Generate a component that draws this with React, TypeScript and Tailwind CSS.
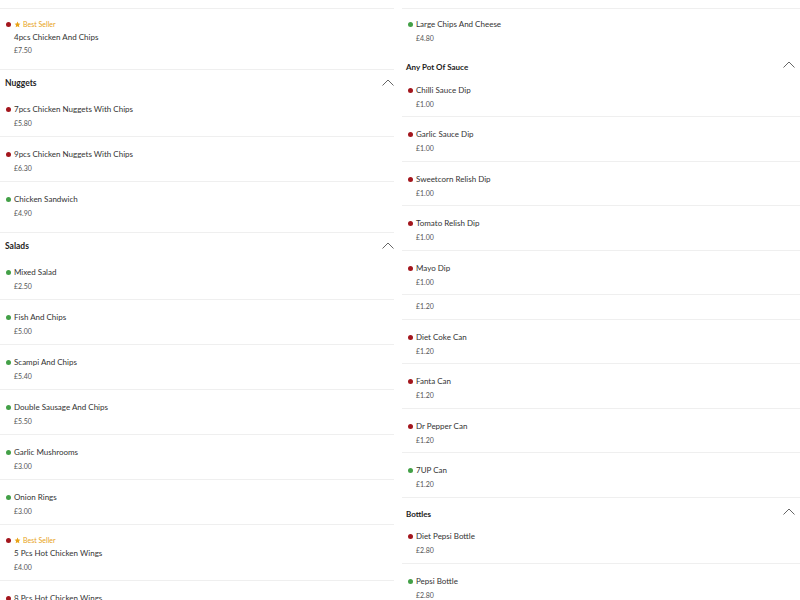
import React from "react";

type Item = { name?: string; price: string; veg?: boolean; best?: boolean; h?: number };

const font = { fontFamily: "Lato, 'Open Sans', sans-serif" };

function Dot({ veg }: { veg?: boolean }) {
  return (
    <span
      className={
        veg
          ? "inline-block w-[5px] h-[5px] rounded-full bg-[#43a047] shrink-0"
          : "inline-block w-[5px] h-[5px] rounded-full bg-[#a3161d] shrink-0"
      }
    />
  );
}

function Chevron() {
  return (
    <svg width="12" height="7" viewBox="0 0 12 7" className="shrink-0">
      <polyline points="0.5,6.5 6,1 11.5,6.5" fill="none" stroke="#555" strokeWidth="0.9" />
    </svg>
  );
}

function Star() {
  return (
    <svg width="7" height="7" viewBox="0 0 24 24" className="shrink-0">
      <path
        d="M12 2l3.09 6.26L22 9.27l-5 4.87 1.18 6.88L12 17.77l-6.18 3.25L7 14.14 2 9.27l6.91-1.01L12 2z"
        fill="#e8a317"
      />
    </svg>
  );
}

function Row({ item, last }: { item: Item; last?: boolean }) {
  if (!item.name) {
    return (
      <div className="h-[25px] border-b border-[#efefef] pl-[14px] pt-[6px] flex flex-col">
        <span className="text-[7px] leading-[10px] text-[#555]">{item.price}</span>
      </div>
    );
  }
  const h = item.best
    ? "h-[56px] pt-[10px] "
    : item.h === 44
    ? "h-[44px] pt-[11px] "
    : "h-[45px] pt-[11px] ";
  return (
    <div className={h + (!last ? "border-b border-[#efefef] " : "") + "flex flex-col pl-[6px]"}>
      {item.best && (
        <div className="flex items-center h-[10px] mb-[2px]">
          <Dot veg={item.veg} />
          <span className="ml-[3px]">
            <Star />
          </span>
          <span className="ml-[2px] text-[7px] leading-[10px] text-[#e8a317]">Best Seller</span>
        </div>
      )}
      <div className="flex items-center h-[12px]">
        {!item.best ? <Dot veg={item.veg} /> : <span className="w-[5px]" />}
        <span className="ml-[3px] text-[8px] leading-[12px] text-[#333]">{item.name}</span>
      </div>
      <div className="mt-[3px] pl-[8px] text-[7px] leading-[10px] text-[#555]">{item.price}</div>
    </div>
  );
}

function LeftSection({ title, items }: { title: string; items: Item[] }) {
  return (
    <div className="border-t border-[#efefef] pb-[5px]">
      <div className="h-[22px] pt-[8px] flex items-start justify-between pl-[5px]">
        <span className="text-[8.5px] leading-[10px] font-bold text-[#222]">{title}</span>
        <span className="mt-[1px]">
          <Chevron />
        </span>
      </div>
      {items.map((it, i) => (
        <Row key={i} item={it} last={i === items.length - 1} />
      ))}
    </div>
  );
}

function RightSection({ title, items, tall }: { title: string; items: Item[]; tall?: boolean }) {
  return (
    <div>
      <div
        className={
          tall
            ? "h-[21px] pt-[11px] flex items-start justify-between pl-[4px] pr-[5px]"
            : "h-[20px] pt-[9px] flex items-start justify-between pl-[4px] pr-[5px]"
        }
      >
        <span className="text-[8px] leading-[10px] font-bold text-[#222]">{title}</span>
        <span className="-mt-[1px]">
          <Chevron />
        </span>
      </div>
      {items.map((it, i) => (
        <Row key={i} item={it} />
      ))}
    </div>
  );
}

const nuggets: Item[] = [
  { name: "7pcs Chicken Nuggets With Chips", price: "£5.80" },
  { name: "9pcs Chicken Nuggets With Chips", price: "£6.30" },
  { name: "Chicken Sandwich", price: "£4.90", veg: true },
];

const salads: Item[] = [
  { name: "Mixed Salad", price: "£2.50", veg: true },
  { name: "Fish And Chips", price: "£5.00", veg: true },
  { name: "Scampi And Chips", price: "£5.40", veg: true },
  { name: "Double Sausage And Chips", price: "£5.50", veg: true },
  { name: "Garlic Mushrooms", price: "£3.00", veg: true },
  { name: "Onion Rings", price: "£3.00", veg: true },
  { name: "5 Pcs Hot Chicken Wings", price: "£4.00", best: true },
  { name: "8 Pcs Hot Chicken Wings", price: "£6.00" },
];

const sauces: Item[] = [
  { name: "Chilli Sauce Dip", price: "£1.00", h: 44 },
  { name: "Garlic Sauce Dip", price: "£1.00" },
  { name: "Sweetcorn Relish Dip", price: "£1.00", h: 44 },
  { name: "Tomato Relish Dip", price: "£1.00" },
  { name: "Mayo Dip", price: "£1.00", h: 44 },
  { price: "£1.20" },
  { name: "Diet Coke Can", price: "£1.20", h: 44 },
  { name: "Fanta Can", price: "£1.20" },
  { name: "Dr Pepper Can", price: "£1.20", h: 44 },
  { name: "7UP Can", price: "£1.20", veg: true },
];

const bottles: Item[] = [
  { name: "Diet Pepsi Bottle", price: "£2.80" },
  { name: "Pepsi Bottle", price: "£2.80", veg: true },
  { name: "Pepsi Max Bottle", price: "£2.80", veg: true },
];

export default function App() {
  return (
    <div className="w-[800px] h-[600px] overflow-hidden bg-white flex" style={font}>
      <div className="w-[394px] shrink-0 pt-[8px]">
        <div className="border-t border-[#efefef]">
          <div className="h-[60px] pt-[10px] flex flex-col pl-[6px]">
            <div className="flex items-center h-[10px] mb-[2px]">
              <Dot />
              <span className="ml-[3px]">
                <Star />
              </span>
              <span className="ml-[2px] text-[7px] leading-[10px] text-[#e8a317]">Best Seller</span>
            </div>
            <div className="pl-[8px] text-[8px] leading-[12px] text-[#333]">4pcs Chicken And Chips</div>
            <div className="mt-[2px] pl-[8px] text-[7px] leading-[10px] text-[#555]">£7.50</div>
          </div>
        </div>
        <LeftSection title="Nuggets" items={nuggets} />
        <LeftSection title="Salads" items={salads} />
      </div>
      <div className="ml-[8px] flex-1 pt-[8px]">
        <div className="border-t border-[#efefef]">
          <div className="h-[44px] pt-[9px] flex flex-col pl-[6px]">
            <div className="flex items-center h-[12px]">
              <Dot veg />
              <span className="ml-[3px] text-[8px] leading-[12px] text-[#333]">Large Chips And Cheese</span>
            </div>
            <div className="mt-[3px] pl-[8px] text-[7px] leading-[10px] text-[#555]">£4.80</div>
          </div>
        </div>
        <RightSection title="Any Pot Of Sauce" items={sauces} />
        <RightSection title="Bottles" items={bottles} tall />
      </div>
    </div>
  );
}
